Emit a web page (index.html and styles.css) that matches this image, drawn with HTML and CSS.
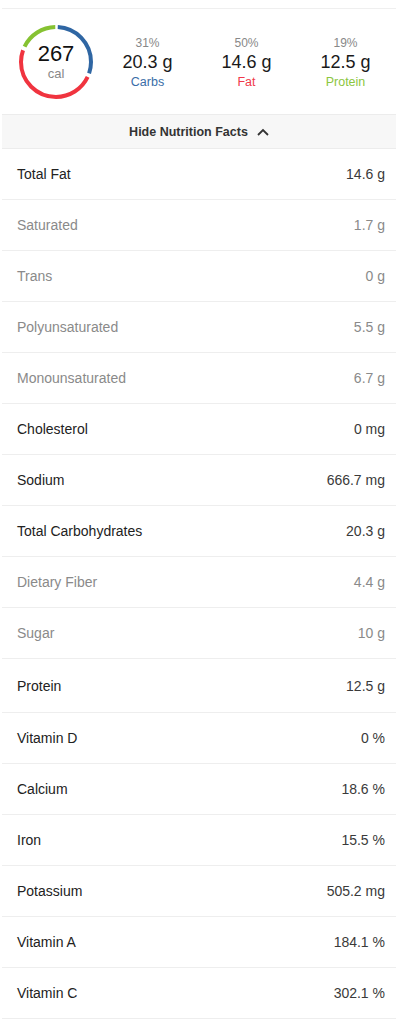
FILE: index.html
```html
<!DOCTYPE html>
<html>
<head>
<meta charset="utf-8">
<link rel="stylesheet" href="styles.css">
</head>
<body>
<div class="panel">
  <div class="summary">
    <div class="ring">
      <svg width="76" height="76" viewBox="0 0 76 76">
        <circle cx="38" cy="38" r="35" fill="none" stroke="#2f66a3" stroke-width="4" stroke-dasharray="64.7 155.2" stroke-dashoffset="-1.8" transform="rotate(-90 38 38)"/>
        <circle cx="38" cy="38" r="35" fill="none" stroke="#f0343f" stroke-width="4" stroke-dasharray="106.4 113.5" stroke-dashoffset="-70.3" transform="rotate(-90 38 38)"/>
        <circle cx="38" cy="38" r="35" fill="none" stroke="#86c232" stroke-width="4" stroke-dasharray="38.2 181.7" stroke-dashoffset="-180.6" transform="rotate(-90 38 38)"/>
      </svg>
      <div class="ring-text">
        <div class="cal-num">267</div>
        <div class="cal-unit">cal</div>
      </div>
    </div>
    <div class="macros">
      <div class="macro">
        <div class="pct">31%</div>
        <div class="amt">20.3 g</div>
        <div class="lbl carbs">Carbs</div>
      </div>
      <div class="macro">
        <div class="pct">50%</div>
        <div class="amt">14.6 g</div>
        <div class="lbl fat">Fat</div>
      </div>
      <div class="macro">
        <div class="pct">19%</div>
        <div class="amt">12.5 g</div>
        <div class="lbl protein">Protein</div>
      </div>
    </div>
  </div>
  <div class="toggle">
    <span>Hide Nutrition Facts</span>
    <svg width="12" height="8" viewBox="0 0 12 8"><path d="M1 7 L6 2 L11 7" fill="none" stroke="#333" stroke-width="1.8"/></svg>
  </div>
  <div class="rows">
    <div class="row main"><span>Total Fat</span><span>14.6 g</span></div>
    <div class="row sub"><span>Saturated</span><span>1.7 g</span></div>
    <div class="row sub"><span>Trans</span><span>0 g</span></div>
    <div class="row sub"><span>Polyunsaturated</span><span>5.5 g</span></div>
    <div class="row sub"><span>Monounsaturated</span><span>6.7 g</span></div>
    <div class="row main"><span>Cholesterol</span><span>0 mg</span></div>
    <div class="row main"><span>Sodium</span><span>666.7 mg</span></div>
    <div class="row main"><span>Total Carbohydrates</span><span>20.3 g</span></div>
    <div class="row sub"><span>Dietary Fiber</span><span>4.4 g</span></div>
    <div class="row sub"><span>Sugar</span><span>10 g</span></div>
    <div class="row main tall"><span>Protein</span><span>12.5 g</span></div>
    <div class="row main"><span>Vitamin D</span><span>0 %</span></div>
    <div class="row main"><span>Calcium</span><span>18.6 %</span></div>
    <div class="row main"><span>Iron</span><span>15.5 %</span></div>
    <div class="row main"><span>Potassium</span><span>505.2 mg</span></div>
    <div class="row main"><span>Vitamin A</span><span>184.1 %</span></div>
    <div class="row main"><span>Vitamin C</span><span>302.1 %</span></div>
  </div>
</div>
</body>
</html>
```
FILE: styles.css
```css
* { box-sizing: border-box; }
body {
  margin: 0;
  background: #fff;
  font-family: "Liberation Sans", Arial, sans-serif;
  color: #222;
}
.panel {
  margin: 8px 5px 0 2px;
  border-top: 1px solid #efefef;
}
.summary {
  height: 105px;
  display: flex;
  align-items: center;
  padding-left: 16px;
}
.ring {
  position: relative;
  width: 76px;
  height: 76px;
}
.ring svg { display: block; }
.ring-text {
  position: absolute;
  inset: 0;
  display: flex;
  flex-direction: column;
  align-items: center;
  justify-content: center;
}
.cal-num {
  font-size: 22px;
  line-height: 24px;
  color: #111;
}
.cal-unit {
  font-size: 13px;
  line-height: 15px;
  color: #888;
}
.macros {
  display: flex;
  margin-left: 4px;
  margin-top: 3px;
}
.macro {
  width: 99px;
  display: flex;
  flex-direction: column;
  align-items: center;
}
.pct {
  font-size: 12px;
  line-height: 16px;
  color: #888;
}
.amt {
  font-size: 18px;
  line-height: 22px;
  color: #1a1a1a;
}
.lbl {
  font-size: 12.5px;
  line-height: 18px;
}
.carbs { color: #3a6ea8; }
.fat { color: #f0394a; }
.protein { color: #8cc63f; }
.toggle {
  height: 35px;
  background: #f7f7f7;
  border-top: 1px solid #ececec;
  border-bottom: 1px solid #ececec;
  display: flex;
  align-items: center;
  justify-content: center;
  gap: 9px;
  font-size: 12.5px;
  font-weight: bold;
  color: #333;
}
.row {
  height: 51px;
  border-bottom: 1px solid #eeeeee;
  display: flex;
  align-items: center;
  justify-content: space-between;
  padding: 0 11px 0 15px;
  font-size: 14px;
}
.row.tall { height: 54px; }
.main { color: #222; }
.main span:last-child { color: #3a3a3a; }
.sub { color: #8a8a8a; }
```
